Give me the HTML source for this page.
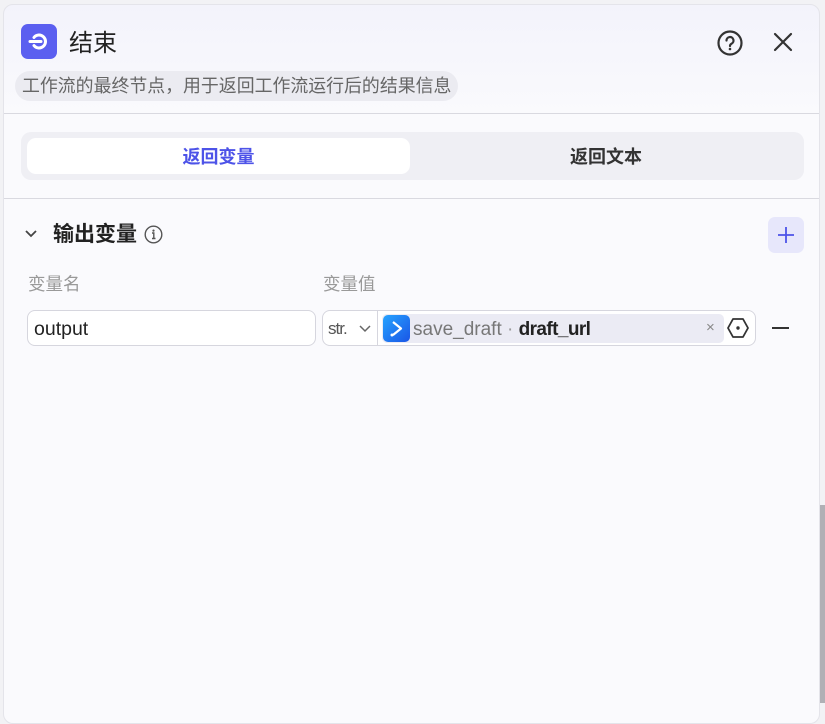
<!DOCTYPE html>
<html><head><meta charset="utf-8"><style>
*{box-sizing:border-box;margin:0;padding:0}
body{width:825px;height:703px;overflow:hidden;background:#f2f2f5;font-family:"Liberation Sans","Noto Sans CJK SC",sans-serif;position:relative}
.panel{position:absolute;left:3px;top:4px;width:817px;height:720px;background:#fafafd;border:1px solid #e4e4ea;border-radius:10px;background:linear-gradient(#f3f3fb 0,#fafafd 110px)}
.a{position:absolute}
.sb{position:absolute;left:820px;top:505px;width:5px;height:198px;background:#b0b0b5}
</style></head><body>
<div class="panel"></div>
<div class="a" style="left:21px;top:24px;width:36px;height:35px;background:#5b5ff0;border-radius:7px">
<svg width="36" height="35" viewBox="0 0 36 35"><path d="M18 11a6.5 6.5 0 1 1 0 13" fill="none" stroke="#fff" stroke-width="3" stroke-linecap="round"/><path d="M18 11a6.5 6.5 0 0 0-5 2.4M18 24a6.5 6.5 0 0 1-5-2.4" fill="none" stroke="#fff" stroke-width="3" stroke-linecap="round"/><line x1="9" y1="17.5" x2="20" y2="17.5" stroke="#fff" stroke-width="3" stroke-linecap="round"/></svg></div>
<div class="a" style="left:69px;top:29px;font-size:24px;color:#222;line-height:30px">结束</div>
<svg class="a" style="left:716px;top:29px" width="28" height="28" viewBox="0 0 28 28"><circle cx="14" cy="14" r="11.5" fill="none" stroke="#333" stroke-width="2.2"/><path d="M10.5 11.5a3.5 3.5 0 1 1 5 3.2c-1 .5-1.5 1.2-1.5 2.3" fill="none" stroke="#333" stroke-width="2.2" stroke-linecap="round"/><circle cx="14" cy="20" r="1.3" fill="#333"/></svg>
<svg class="a" style="left:772px;top:31px" width="22" height="22" viewBox="0 0 22 22"><path d="M3 3L19 19M19 3L3 19" stroke="#333" stroke-width="2.2" stroke-linecap="round"/></svg>
<div class="a" style="left:15px;top:71px;width:443px;height:30px;background:#ebebf1;border-radius:15px;font-size:17.9px;color:#666;line-height:31px;padding-left:7px;white-space:nowrap">工作流的最终节点，用于返回工作流运行后的结果信息</div>
<div class="a" style="left:4px;top:113px;width:815px;height:1px;background:#d9d9e0"></div>
<div class="a" style="left:21px;top:132px;width:783px;height:48px;background:#efeff4;border-radius:10px"></div>
<div class="a" style="left:27px;top:138px;width:383px;height:36px;background:#fff;border-radius:9px;text-align:center;line-height:38px;font-size:18px;font-weight:bold;color:#4d53e8">返回变量</div>
<div class="a" style="left:410px;top:138px;width:392px;height:36px;text-align:center;line-height:38px;font-size:18px;font-weight:bold;color:#333">返回文本</div>
<div class="a" style="left:4px;top:198px;width:815px;height:1px;background:#d9d9e0"></div>
<svg class="a" style="left:24px;top:228px" width="14" height="12" viewBox="0 0 14 12"><path d="M2 3l5 5 5-5" fill="none" stroke="#444" stroke-width="1.8"/></svg>
<div class="a" style="left:53px;top:221px;font-size:21px;font-weight:bold;color:#222;line-height:28px">输出变量</div>
<svg class="a" style="left:144px;top:225px" width="19" height="19" viewBox="0 0 19 19"><circle cx="9.5" cy="9.5" r="8.3" fill="none" stroke="#555" stroke-width="1.4"/><circle cx="9.5" cy="5.6" r="1.1" fill="#555"/><path d="M8 8h1.8v5.5M8 13.5h3.5" fill="none" stroke="#555" stroke-width="1.4"/></svg>
<div class="a" style="left:768px;top:217px;width:36px;height:36px;background:#e7e7fb;border-radius:7px"><svg width="36" height="36"><path d="M18 10v16M10 18h16" stroke="#4d53e8" stroke-width="1.8"/></svg></div>
<div class="a" style="left:28px;top:272px;font-size:17.5px;color:#999;line-height:24px">变量名</div>
<div class="a" style="left:323px;top:272px;font-size:17.5px;color:#999;line-height:24px">变量值</div>
<div class="a" style="left:27px;top:310px;width:289px;height:36px;border:1px solid #d6d6de;border-radius:8px;background:#fff;font-size:19.5px;line-height:36px;padding-left:6px;color:#222">output</div>
<div class="a" style="left:322px;top:310px;width:434px;height:36px;border:1px solid #d6d6de;border-radius:8px;background:#fff"></div>
<div class="a" style="left:328px;top:317px;font-size:17px;color:#555;line-height:24px;letter-spacing:-1px">str.</div>
<svg class="a" style="left:358px;top:323px" width="14" height="12" viewBox="0 0 14 12"><path d="M2 3l5 5 5-5" fill="none" stroke="#666" stroke-width="1.5"/></svg>
<div class="a" style="left:377px;top:311px;width:1px;height:34px;background:#d6d6de"></div>
<div class="a" style="left:382px;top:314px;width:342px;height:29px;background:#ebebf4;border-radius:5px"></div>
<div class="a" style="left:383px;top:315px;width:27px;height:27px;border-radius:5px;background:linear-gradient(135deg,#27a4ff,#1a55e6)"><svg width="27" height="27"><path d="M10 7l8 6.5-8 6.5" fill="none" stroke="#fff" stroke-width="2.2" stroke-linejoin="round"/><circle cx="9" cy="20" r="1.5" fill="#fff"/></svg></div>
<div class="a" style="left:413px;top:317px;font-size:19px;line-height:26px;color:#777;white-space:nowrap">save_draft<span style="color:#999"> · </span><span style="color:#222;font-weight:bold;letter-spacing:-0.6px">draft_url</span></div>
<div class="a" style="left:706px;top:316px;font-size:15px;color:#888;line-height:24px">×</div>
<svg class="a" style="left:727px;top:317px" width="22" height="22" viewBox="0 0 22 22"><path d="M6 2h10l5 9-5 9H6l-5-9z" fill="none" stroke="#333" stroke-width="1.8" stroke-linejoin="round"/><circle cx="11" cy="11" r="1.7" fill="#333"/></svg>
<div class="a" style="left:772px;top:327px;width:17px;height:2px;background:#333"></div>
<div class="sb"></div>
</body></html>
